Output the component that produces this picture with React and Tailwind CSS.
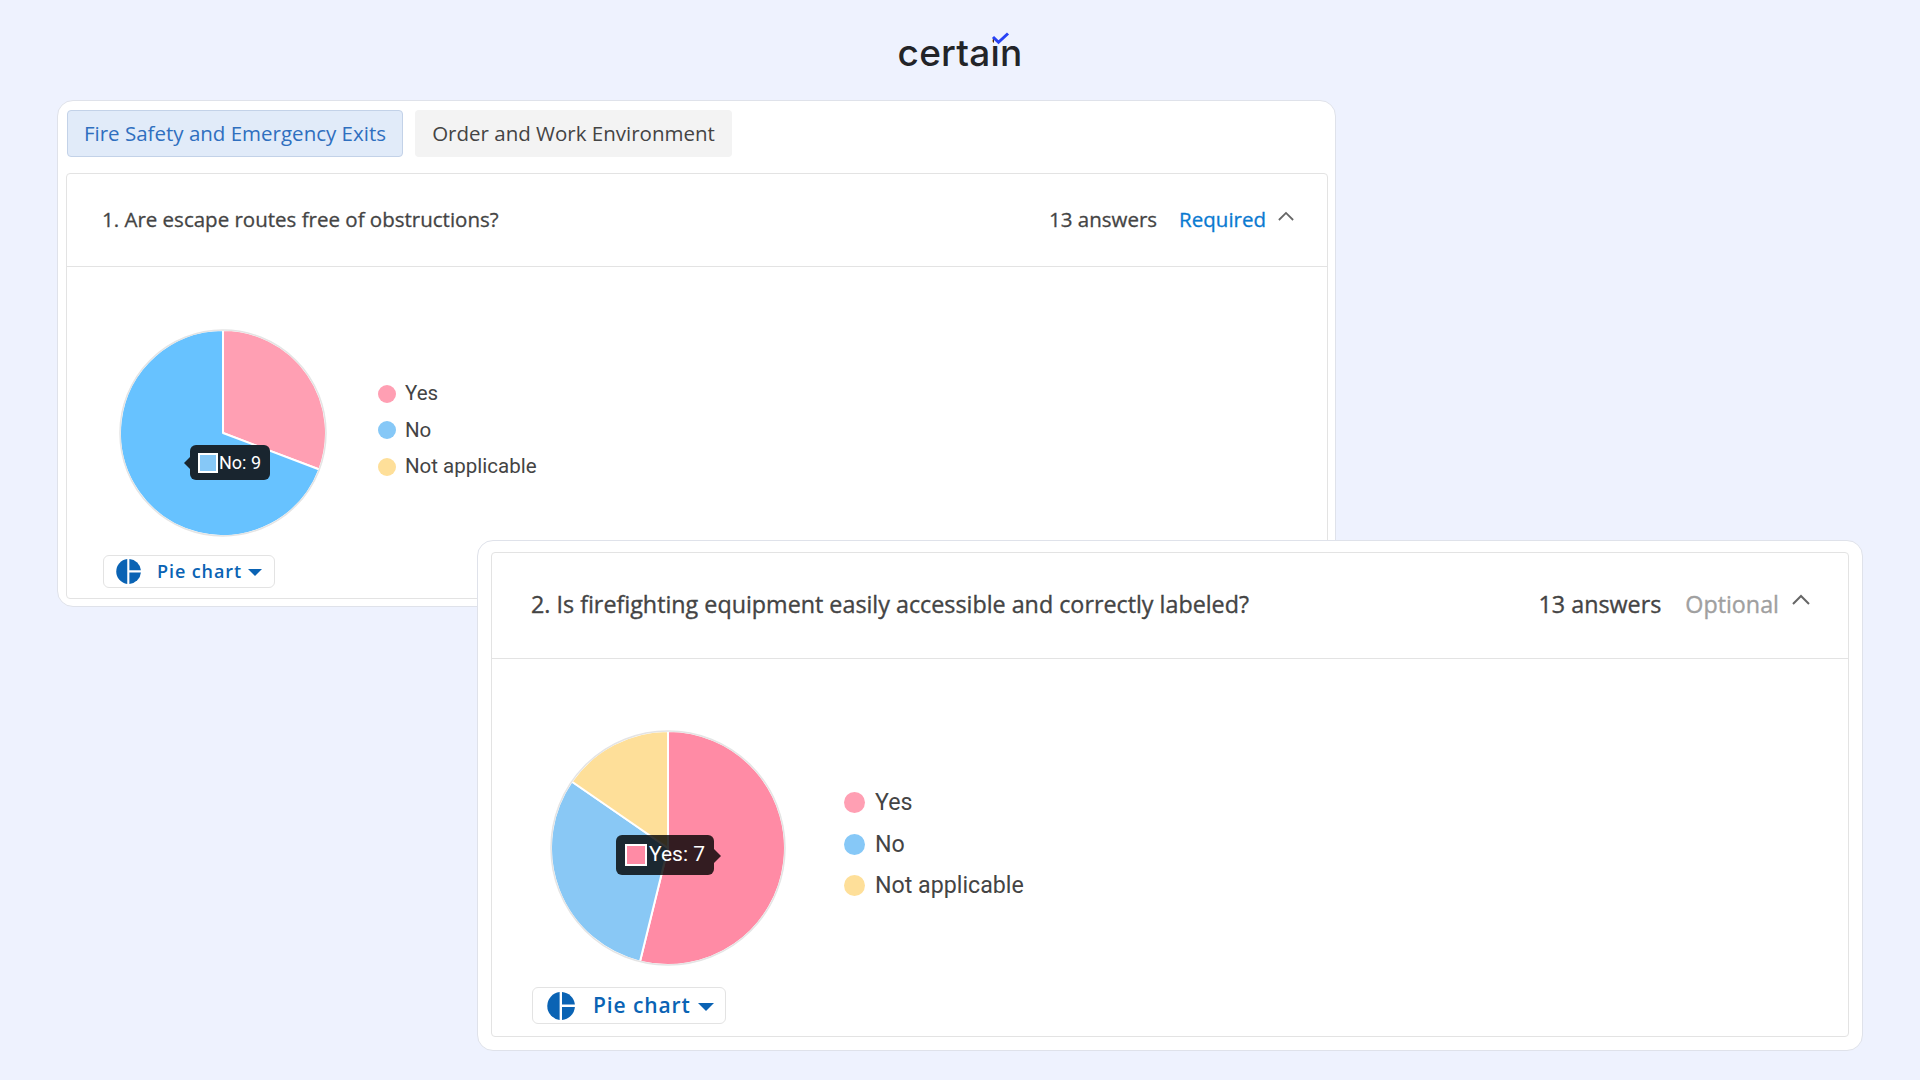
const polar = (cx, cy, r, deg) => {
  const rad = ((deg - 90) * Math.PI) / 180;
  return [cx + r * Math.cos(rad), cy + r * Math.sin(rad)];
};

const slicePath = (cx, cy, r, from, to) => {
  const [x1, y1] = polar(cx, cy, r, from);
  const [x2, y2] = polar(cx, cy, r, to);
  const large = to - from > 180 ? 1 : 0;
  return `M${cx} ${cy} L${x1} ${y1} A${r} ${r} 0 ${large} 1 ${x2} ${y2} Z`;
};

function Pie({ size, slices }) {
  const c = size / 2;
  const r = c - 2;
  const total = slices.reduce((sum, s) => sum + s.value, 0);
  let angle = 0;
  return (
    <svg width={size} height={size} viewBox={`0 0 ${size} ${size}`}>
      {slices.map((s) => {
        const from = angle;
        angle += (s.value / total) * 360;
        return (
          <path
            key={s.color}
            d={slicePath(c, c, r, from, angle)}
            fill={s.color}
            stroke="#ffffff"
            strokeWidth="2"
            strokeLinejoin="round"
          />
        );
      })}
      <circle cx={c} cy={c} r={r} fill="none" stroke="#e4e4e4" strokeWidth="1.5" />
    </svg>
  );
}

function PieIcon({ size }) {
  return (
    <svg width={size} height={size} viewBox="0 0 28 28" fill="#0a63b4">
      <path d="M12.6 0.1 A14 14 0 0 0 12.6 27.9 Z" />
      <path d="M15 0.1 A14 14 0 0 1 27.9 12.6 H15 Z" />
      <path d="M15 15 H27.9 A14 14 0 0 1 15 27.9 Z" />
    </svg>
  );
}

function Chevron({ className }) {
  return (
    <svg className={className} viewBox="0 0 18 11" fill="none" stroke="#666666" strokeWidth="2">
      <path d="M1 10 L9 2 L17 10" />
    </svg>
  );
}

function Legend({ items, className, dotClass }) {
  return (
    <div className={className}>
      {items.map((item) => (
        <div key={item.label} className="flex items-center">
          <span className={dotClass} style={{ backgroundColor: item.color }} />
          <span>{item.label}</span>
        </div>
      ))}
    </div>
  );
}

function Logo() {
  return (
    <div className="relative flex h-[100px] items-start justify-center">
      <span className="mt-[27px] font-['Inter',sans-serif] text-[37px] leading-[52px] font-medium tracking-[0.2px] text-[#222428]">
        certain
      </span>
      <svg className="absolute top-[30px] left-[990px]" width="20" height="15" viewBox="0 0 20 15">
        <rect x="4" y="3" width="12" height="12" fill="#eef2fe" />
        <path d="M3 7 L8.5 12.3 L18 3.5" fill="none" stroke="#2742f5" strokeWidth="3" />
      </svg>
    </div>
  );
}

const firstSlices = [
  { value: 4, color: "#ff9fb3" },
  { value: 9, color: "#67c2ff" },
];

const secondSlices = [
  { value: 7, color: "#ff8ba5" },
  { value: 4, color: "#89c8f5" },
  { value: 2, color: "#fedf99" },
];

const legendItems = [
  { label: "Yes", color: "#ff9fb3" },
  { label: "No", color: "#86c8f7" },
  { label: "Not applicable", color: "#fedf99" },
];

export default function App() {
  return (
    <div className="h-[1080px] w-[1920px] overflow-hidden bg-[#eef2fe] font-['Open_Sans',sans-serif] text-[#444444]">
      <Logo />

      <div className="ml-[57px] flex h-[507px] w-[1279px] flex-col rounded-2xl border border-[#dfe2ea] bg-white pt-[9px] pr-[7px] pb-[7px] pl-[8px]">
        <div className="ml-px flex gap-3">
          <div className="flex h-[47px] w-[336px] items-center justify-center rounded border border-[#c3d2e8] bg-[#e1ebf9] text-[20.5px] text-[#2f6fbf]">
            Fire Safety and Emergency Exits
          </div>
          <div className="flex h-[47px] w-[317px] items-center justify-center rounded bg-[#f3f3f3] text-[20.5px]">
            Order and Work Environment
          </div>
        </div>

        <div className="mt-4 flex flex-1 flex-col rounded border border-[#e3e3e3]">
          <div className="flex h-[93px] items-center justify-between border-b border-[#e3e3e3] pr-[33px] pb-[1px] pl-[35px]">
            <div className="text-[20.5px] [-webkit-text-stroke:0.3px]">1. Are escape routes free of obstructions?</div>
            <div className="flex items-center text-[20.5px] [-webkit-text-stroke:0.3px]">
              <span>13 answers</span>
              <span className="ml-[22px] text-[#0a7ad1]">Required</span>
              <Chevron className="mb-[7px] ml-[12px] h-[10px] w-[16px]" />
            </div>
          </div>

          <div className="flex flex-1 flex-col pt-[61px] pl-[36px]">
            <div className="flex items-center">
              <div className="relative ml-[15px]">
                <Pie size={210} slices={firstSlices} />
                <div className="absolute top-[117px] left-[72px] flex h-[35px] w-[80px] items-center rounded-md bg-[#19252f] pl-[8px] font-['Roboto',sans-serif] text-[18px] text-white">
                  <span className="absolute top-[12px] left-[-6px] h-0 w-0 border-y-[6px] border-r-[6px] border-y-transparent border-r-[#19252f]" />
                  <span className="mr-[1px] h-[20px] w-[20px] border-2 border-white bg-[#86c8f7]" />
                  No: 9
                </div>
              </div>
              <Legend
                items={legendItems}
                className="mb-[6px] ml-[50px] flex flex-col gap-[10px] font-['Roboto',sans-serif] text-[20.5px] leading-[26.5px] text-[#444444]"
                dotClass="mr-[9px] h-[18px] w-[18px] rounded-full"
              />
            </div>
            <div className="mt-[17px] flex h-[33px] w-[172px] items-center rounded-md border border-[#e3e3e3] pl-[12px] font-semibold text-[#0a63b4]">
              <PieIcon size={25} />
              <span className="ml-[16px] text-[18px] tracking-[0.9px]">Pie chart</span>
              <span className="mt-[2px] ml-[6px] h-0 w-0 border-x-[7px] border-t-[7px] border-x-transparent border-t-[#0a63b4]" />
            </div>
          </div>
        </div>
      </div>

      <div className="relative mt-[-67px] ml-[477px] flex h-[511px] w-[1386px] flex-col rounded-2xl border border-[#dfe2ea] bg-white px-[13px] pt-[11px] pb-[13px]">
        <div className="flex flex-1 flex-col rounded border border-[#e3e3e3]">
          <div className="flex h-[106px] items-center justify-between border-b border-[#e3e3e3] pr-[38px] pb-[3px] pl-[39px]">
            <div className="text-[23.3px] [-webkit-text-stroke:0.35px]">
              2. Is firefighting equipment easily accessible and correctly labeled?
            </div>
            <div className="flex items-center text-[23.3px] [-webkit-text-stroke:0.35px]">
              <span>13 answers</span>
              <span className="ml-[24px] text-[#a0a0a0]">Optional</span>
              <Chevron className="mb-[9px] ml-[13px] h-[11px] w-[18px]" />
            </div>
          </div>

          <div className="flex flex-1 flex-col pt-[70px] pl-[40px]">
            <div className="flex items-center">
              <div className="relative ml-[17px]">
                <Pie size={238} slices={secondSlices} />
                <div className="absolute top-[106px] left-[67px] flex h-[40px] w-[98px] items-center rounded-md bg-black/80 pl-[9px] font-['Roboto',sans-serif] text-[21px] text-white">
                  <span className="absolute top-[14px] right-[-7px] h-0 w-0 border-y-[7px] border-l-[7px] border-y-transparent border-l-black/80" />
                  <span className="mr-[2px] h-[22px] w-[22px] border-2 border-white bg-[#ff8ba5]" />
                  Yes: 7
                </div>
              </div>
              <Legend
                items={legendItems}
                className="mb-[8px] ml-[57px] flex flex-col gap-[11px] font-['Roboto',sans-serif] text-[23.2px] leading-[30.5px] text-[#444444]"
                dotClass="mr-[10px] h-[21px] w-[21px] rounded-full"
              />
            </div>
            <div className="mt-[20px] flex h-[37px] w-[194px] items-center rounded-md border border-[#e3e3e3] pl-[14px] font-semibold text-[#0a63b4]">
              <PieIcon size={28} />
              <span className="ml-[18px] text-[21px] tracking-[0.9px]">Pie chart</span>
              <span className="mt-[2px] ml-[7px] h-0 w-0 border-x-[8px] border-t-[8px] border-x-transparent border-t-[#0a63b4]" />
            </div>
          </div>
        </div>
      </div>
    </div>
  );
}
